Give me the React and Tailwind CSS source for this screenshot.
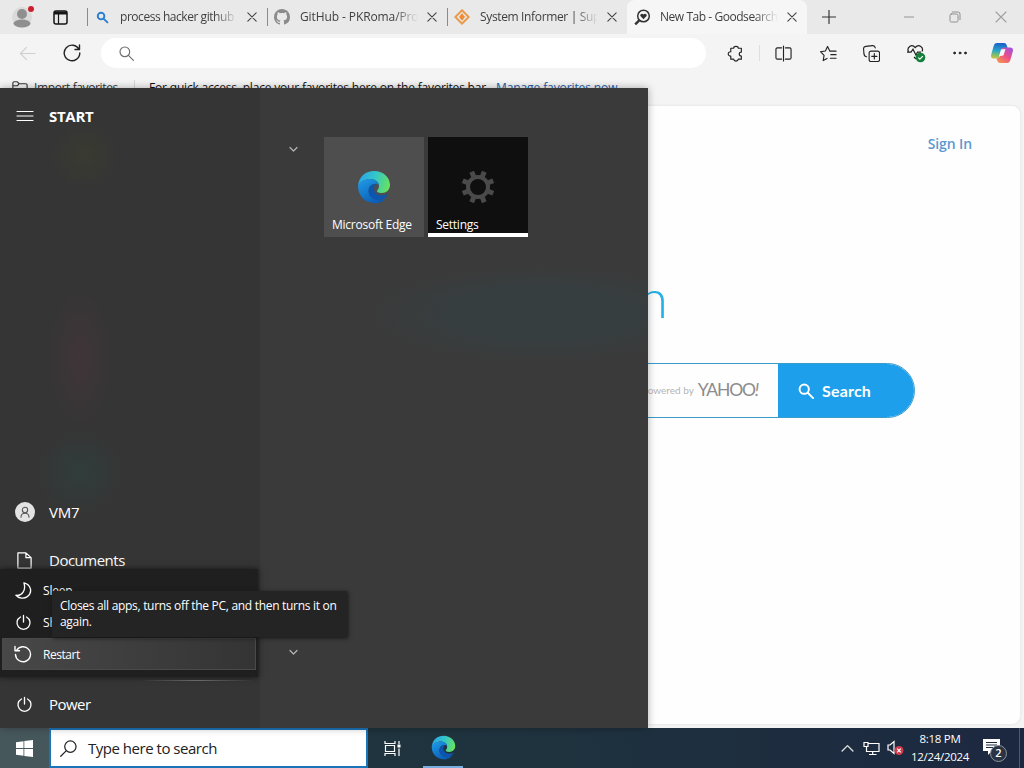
import { VscGithubInverted } from "react-icons/vsc"

function Icon({ size = 18, width = 1.2, className = "", children }) {
  return (
    <svg
      width={size}
      height={size}
      viewBox="0 0 18 18"
      fill="none"
      stroke="currentColor"
      strokeWidth={width}
      strokeLinecap="round"
      strokeLinejoin="round"
      className={`shrink-0 ${className}`}
    >
      {children}
    </svg>
  )
}

function EdgeLogo({ size }) {
  return (
    <svg width={size} height={size} viewBox="0 0 34 34" fill="none" className="shrink-0">
      <defs>
        <linearGradient id="edgeTop" x1="2" y1="8" x2="32" y2="18" gradientUnits="userSpaceOnUse">
          <stop offset="0" stopColor="#2aa5e8" />
          <stop offset="0.5" stopColor="#35c8c4" />
          <stop offset="1" stopColor="#6be25a" />
        </linearGradient>
        <linearGradient id="edgeSide" x1="4" y1="8" x2="18" y2="34" gradientUnits="userSpaceOnUse">
          <stop offset="0" stopColor="#1f9be6" />
          <stop offset="1" stopColor="#0b5bb5" />
        </linearGradient>
      </defs>
      <path
        d="M1 16C2 6 9 1 17 1c10 0 16 7 16 14 0 5-4 8-8 8-4 0-5-1-5-2 0-1 2-2 2-5 0-4-4-7-9-7C8 9 3 12 1 16z"
        fill="url(#edgeTop)"
      />
      <path
        d="M1 16c2-5 7-7 12-7 5 0 9 3 9 6-2-2-8-2-10 3-2 7 4 13 12 12 2 0 4-1 5-2-3 4-8 6-13 5C7 32 1 25 1 16z"
        fill="url(#edgeSide)"
      />
      <path
        d="M12 18c1-3 4-4 7-4-1 1-2 3-2 4 0 7 7 9 14 6-2 4-6 7-11 6-6-1-10-6-8-12z"
        fill="#0e55ad"
      />
    </svg>
  )
}

function PowerIcon({ size = 18 }) {
  return (
    <Icon size={size} width={1.4}>
      <path d="M9 1.5v7M5.8 3.2a6.9 6.9 0 1 0 6.4 0" />
    </Icon>
  )
}

function Gear() {
  return (
    <svg width="34" height="34" viewBox="0 0 34 34" fill="none" stroke="#4a4a4a">
      <circle cx="17" cy="17" r="10" strokeWidth="4" />
      {[22.5, 67.5, 112.5, 157.5, 202.5, 247.5, 292.5, 337.5].map((angle) => (
        <path key={angle} d="M17 6V0.500" strokeWidth="5" transform={`rotate(${angle} 17 17)`} />
      ))}
    </svg>
  )
}

const tabs = [
  {
    title: "process hacker github",
    tracking: "tracking-[-0.45px]",
    icon: (
      <Icon size={13} width={2.6} className="text-[#2b7fd0]">
        <circle cx="7" cy="7" r="4.6" />
        <path d="m10.8 10.8 5 5" />
      </Icon>
    ),
  },
  {
    title: "GitHub - PKRoma/Pro",
    tracking: "tracking-[-0.1px]",
    icon: <VscGithubInverted size={16} className="text-[#8b8b8b]" />,
  },
  {
    title: "System Informer | Supp",
    tracking: "tracking-[-0.35px]",
    icon: (
      <svg width="16" height="16" viewBox="0 0 16 16" fill="none">
        <path d="m8 1.3 6.7 6.7L8 14.7 1.3 8z" stroke="#e99a4b" strokeWidth="2" />
        <path d="M8 4.3 11 8l-3 3.7L5 8z" fill="#ee8d35" />
      </svg>
    ),
  },
  {
    title: "New Tab - Goodsearch",
    tracking: "tracking-[-0.45px]",
    active: true,
    icon: (
      <svg width="17" height="17" viewBox="0 0 17 17" fill="none" stroke="#333" className="-ml-1">
        <circle cx="9.5" cy="7" r="5.8" strokeWidth="1.5" />
        <path d="m5.2 11.4-4 4" strokeWidth="2.4" />
        <path d="M9.5 10.2 6.4 7c-.8-1.6 1.6-3.2 3.1-1.5 1.5-1.7 3.9-.1 3.1 1.5z" fill="#333" stroke="none" />
      </svg>
    ),
  },
]

function TabBar() {
  return (
    <div className="flex h-[34px] bg-[#e9e9e9] text-xs text-[#3f3f3f]">
      <div className="relative flex w-[87px] items-center pl-3">
        <svg width="20" height="22" viewBox="0 0 20 22" className="text-[#8a8a8a]">
          <circle cx="10" cy="11" r="10" fill="#dadada" />
          <circle cx="10" cy="8" r="5" fill="#8f8f8f" />
          <ellipse cx="10" cy="17.5" rx="8.5" ry="4" fill="#8f8f8f" />
        </svg>
        <span className="absolute left-[28px] top-[6px] size-[6px] rounded-full bg-[#cc1f2b]" />
        <svg width="15" height="15" viewBox="0 0 15 15" fill="none" stroke="#161616" className="ml-[21px]">
          <rect x="1" y="1" width="13" height="13" rx="2" strokeWidth="1.5" />
          <path d="M1 3h13" strokeWidth="3" />
          <path d="M5.5 4v10" strokeWidth="1.2" />
        </svg>
      </div>
      {tabs.map((tab) => (
        <div
          key={tab.title}
          className={
            tab.active
              ? "flex w-[180px] items-center rounded-t-lg bg-[#f6f6f6]"
              : "flex w-[180px] items-center"
          }
        >
          <span className={tab.active ? "h-[18px] w-px" : "h-[18px] w-px bg-[#8a8a8a]"} />
          <span className={tab.active ? "flex w-8 justify-center" : "flex w-8 justify-center pr-1"}>
            {tab.icon}
          </span>
          <span className={`w-[118px] whitespace-nowrap mask-r-from-80% ${tab.tracking}`}>
            {tab.title}
          </span>
          <Icon size={10} width={2} className="ml-[9px] text-[#444]">
            <path d="m1.5 1.5 15 15M16.5 1.5l-15 15" />
          </Icon>
        </div>
      ))}
      <div className="flex flex-1 items-center pl-[15px]">
        <Icon size={14} width={1.5} className="text-[#333]">
          <path d="M9 .5v17M.5 9h17" />
        </Icon>
        <Icon size={10} width={1.6} className="ml-[68px] text-[#8a8a8a]">
          <path d="M0 9h18" />
        </Icon>
        <Icon size={12} width={1.4} className="ml-[35px] text-[#8a8a8a]">
          <rect x="1.5" y="4.5" width="12" height="12" rx="2" />
          <path d="M5 1.5h8.5a3 3 0 0 1 3 3V13" />
        </Icon>
        <Icon size={12} width={1.7} className="ml-[34px] text-[#a0a0a0]">
          <path d="m1.5 1.5 15 15M16.5 1.5l-15 15" />
        </Icon>
      </div>
    </div>
  )
}

function CopilotLogo() {
  return (
    <svg width="22" height="20" viewBox="0 0 22 20" fill="none">
      <defs>
        <linearGradient id="pilotA" x1="6" y1="0" x2="4" y2="17" gradientUnits="userSpaceOnUse">
          <stop offset="0" stopColor="#1b62c9" />
          <stop offset="0.45" stopColor="#2aa6c9" />
          <stop offset="0.75" stopColor="#8fc25a" />
          <stop offset="1" stopColor="#f2c23c" />
        </linearGradient>
        <linearGradient id="pilotB" x1="19" y1="4" x2="8" y2="20" gradientUnits="userSpaceOnUse">
          <stop offset="0" stopColor="#a34fe0" />
          <stop offset="0.5" stopColor="#ec4f86" />
          <stop offset="1" stopColor="#f5974e" />
        </linearGradient>
      </defs>
      <path d="M6 0h7c2 0 2.500 1.500 3 3l.6 2H13c-2 0-2.500 1-3 3l-1.500 5c-.5 2-1.500 2.500-3 2.500H3c-3 0-3.500-2-2.500-5l2-7C3.200 1 4.200 0 6 0z" fill="url(#pilotA)" />
      <path d="M16 20H9c-2 0-2.500-1.500-3-3l-.5-1.500c2 0 3-1 3.500-3L10.500 7c.5-2 1.500-2.500 3-2.500H19c3 0 3.500 2 2.500 5l-2 7C18.800 19 17.800 20 16 20z" fill="url(#pilotB)" />
      <path d="m10 6.500 4.500-.5-2 6.500-4.500.8z" fill="#f6f6f6" />
    </svg>
  )
}

function Toolbar() {
  return (
    <div className="flex h-[38px] items-center text-[#222]">
      <Icon size={17} width={1.2} className="ml-[19px] text-[#cfcfcf]">
        <path d="M17 9H1.5M8 2.500 1.500 9 8 15.500" />
      </Icon>
      <Icon size={18} width={1.4} className="ml-[27px]">
        <path d="M16 5.500A7.800 7.800 0 1 0 16.800 9M16.500 1v4.500H12" />
      </Icon>
      <div className="ml-5 flex h-[30px] w-[605px] items-center rounded-full bg-white pl-[18px]">
        <Icon size={15} width={1.4} className="text-[#6d6d6d]">
          <circle cx="7" cy="7" r="5.8" />
          <path d="m11.300 11.300 6 6" />
        </Icon>
      </div>
      <Icon size={17} className="ml-[21px]">
        <path d="M4 3.500h3c.2-2.700 4.800-2.700 5 0h3.200V7.500c-3 0-3 4.200 0 4.200V15H12c-.4 2.700-4.600 2.700-5 0H4v-3.300c-3.600 0-3.600-4.600 0-4.600z" />
      </Icon>
      <span className="ml-[15px] h-4 w-px bg-[#dedede]" />
      <Icon size={17} className="ml-[15px]">
        <path d="M7 3H2.500A1.500 1.500 0 0 0 1 4.500v9A1.500 1.500 0 0 0 2.500 15H7M11 3h4.500A1.500 1.500 0 0 1 17 4.500v9a1.500 1.500 0 0 1-1.500 1.500H11M9 1v16" />
      </Icon>
      <Icon size={17} className="ml-[28px]">
        <path d="M10.500 6.500 8 1.500 5.700 6.300l-5.200.8L4.300 11l-.9 5.500 4.100-2.300M10.500 6.500H17M11.500 10.200H17M11 14h6" />
      </Icon>
      <Icon size={17} className="ml-[26px]">
        <rect x="6.500" y="6.500" width="11" height="11" rx="2" />
        <path d="M12 9.200v5.600M9.200 12h5.600M3.800 12.500C2 12.500 1.300 11 1 9.500L.6 4C.5 2.500 1.500 1.700 3 1.500L10 .7c1.700-.2 2.700.6 3 2.300" />
      </Icon>
      <svg width="20" height="19" viewBox="0 0 20 19" fill="none" stroke="#222" strokeWidth="1.2" className="ml-[26px]">
        <path d="m10 15-2-2M2.500 7.500C.5 3.500 5.500-.5 9.200 3.500 13-.5 18 3.500 16 7.500M1 8.200h4l2-3 3 6 1.500-3H15" />
        <circle cx="14.500" cy="13.500" r="4.800" fill="#13803a" stroke="none" />
        <path d="m12.300 13.600 1.600 1.600 2.900-3" stroke="#fff" />
      </svg>
      <Icon size={14} className="ml-[27px]">
        <circle cx="2" cy="9" r="1.200" fill="currentColor" />
        <circle cx="9" cy="9" r="1.200" fill="currentColor" />
        <circle cx="16" cy="9" r="1.200" fill="currentColor" />
      </Icon>
      <span className="ml-6">
        <CopilotLogo />
      </span>
    </div>
  )
}

function FavoritesBar() {
  return (
    <div className="flex h-[34px] items-center pb-[2px] text-xs text-[#333]">
      <Icon size={16} width={1.3} className="ml-3">
        <path d="M1 14V3.500A1.500 1.500 0 0 1 2.500 2H6l2 2.200h7.500A1.500 1.500 0 0 1 17 5.700V14a1.500 1.500 0 0 1-1.500 1.500h-13A1.500 1.500 0 0 1 1 14zM1 6.500h5L8 4.200" />
      </Icon>
      <span className="ml-[6px] w-[85px] whitespace-nowrap tracking-[-0.38px]">Import favorites</span>
      <span className="ml-[15px] h-4 w-px bg-[#d5d5d5]" />
      <span className="ml-[14px] w-[347px] whitespace-nowrap tracking-[-0.18px] text-[#111]">
        For quick access, place your favorites here on the favorites bar.
      </span>
      <span className="whitespace-nowrap tracking-[-0.1px] text-[#1f5ea8]">Manage favorites now</span>
    </div>
  )
}

function GoodsearchPage() {
  return (
    <div className="mr-1 flex h-[618px] flex-col items-end overflow-hidden rounded-lg bg-[#fefefe] shadow-[0_0_3px_#dcdcdc]">
      <span className="mr-[48px] mt-[28px] text-sm font-semibold leading-5 tracking-[-0.1px] text-[#5b98cf]">
        Sign In
      </span>
      <span className="mr-[352px] mt-[114px] font-['Lato',sans-serif] text-[54px] font-light leading-[60px] text-[#22b0e6]">
        Goodsearch
      </span>
      <div className="mr-[105px] mt-[35px] flex h-[55px] w-[560px] overflow-hidden rounded-full border border-[#3b9bcb]">
        <div className="flex flex-1 items-center justify-end pr-5 font-['Lato',sans-serif] text-[#8c8c8c]">
          <span className="mr-1 text-[10px] text-[#b5b5b5]">Powered by</span>
          <span className="text-[17.5px] tracking-[-1.2px]">
            YAHOO<i>!</i>
          </span>
        </div>
        <button className="flex w-[136px] items-center bg-[#1d9fec] pl-5 font-['Lato',sans-serif] text-base font-bold tracking-[0.2px] text-white">
          <Icon size={16} width={2.2} className="mr-2">
            <circle cx="7" cy="7" r="5.2" />
            <path d="m11 11 6 6" />
          </Icon>
          Search
        </button>
      </div>
    </div>
  )
}

function Chevron() {
  return (
    <Icon size={9} width={2.4} className="text-[#b5b5b5]">
      <path d="m2 5 7 7 7-7" />
    </Icon>
  )
}

const powerOptions = [
  {
    name: "Sleep",
    icon: (
      <Icon size={17} width={1.4}>
        <path d="M9.500 1C17 3 19 11 13 15.500 9.500 18 4 17.500 1 14c6 1 11-5 8.500-13z" />
      </Icon>
    ),
  },
  { name: "Shut down", icon: <PowerIcon size={17} /> },
  {
    name: "Restart",
    selected: true,
    icon: (
      <Icon size={18} width={1.4}>
        <path d="M2.500 5.500a7.500 7.500 0 1 1-1 4M1 1.500v4.300h4.500" />
      </Icon>
    ),
  },
]

function PowerMenu() {
  return (
    <div className="absolute left-0 top-[481px] h-[108px] w-[258px] bg-[#1f1f1f] px-[2px] pt-[5px] shadow-[0_0_6px_#151515]">
      {powerOptions.map((option) => (
        <div
          key={option.name}
          className={
            option.selected
              ? "flex h-8 items-center border border-[#4a4a4a] bg-linear-to-r from-[#484848] to-[#343434] pl-[11px]"
              : "flex h-8 items-center pl-[13px]"
          }
        >
          {option.icon}
          <span
            className={
              option.selected
                ? "ml-[11px] pt-0.5 text-xs tracking-[-0.45px] text-white"
                : "ml-[11px] pt-0.5 text-xs tracking-[-0.2px] text-white"
            }
          >
            {option.name}
          </span>
        </div>
      ))}
      <div className="absolute left-[52px] top-[22px] h-[46px] w-[295px] bg-[#242424] py-[7px] pl-2 text-xs leading-4 text-white shadow-[1px_1px_4px_#151515]">
        <p className="whitespace-nowrap tracking-[-0.3px]">
          Closes all apps, turns off the PC, and then turns it on
        </p>
        <p className="tracking-[-0.3px]">again.</p>
      </div>
    </div>
  )
}

function StartMenu() {
  return (
    <div className="absolute left-0 top-[88px] flex h-[640px] w-[648px] bg-[#3a3a3a] text-white shadow-[0_0_8px_#00000050]">
      <div className="flex w-[260px] flex-col bg-[#353535] bg-[radial-gradient(circle_at_84px_68px,#393a30,transparent_34px),radial-gradient(ellipse_34px_74px_at_80px_270px,#403539,transparent),radial-gradient(circle_at_80px_384px,#303d3c,transparent_42px)]">
        <div className="flex h-14 items-center pl-4">
          <Icon size={18} width={1.2}>
            <path d="M1 4.500h16M1 9h16M1 13.500h16" />
          </Icon>
          <span className="ml-[15px] text-[15px] font-bold tracking-[-0.3px]">START</span>
        </div>
        <div className="mt-[344px] flex h-12 items-center pl-[15px]">
          <span className="flex size-5 items-center justify-center rounded-full bg-[#e3e3e3] text-[#555]">
            <Icon size={12} width={1.6}>
              <circle cx="9" cy="6" r="4" />
              <path d="M3 17c0-8 12-8 12 0" />
            </Icon>
          </span>
          <span className="ml-[14px] text-[15px] tracking-[-0.2px]">VM7</span>
        </div>
        <div className="flex h-12 items-center pl-4">
          <Icon size={17} width={1.3}>
            <path d="M2 1h8.500L16 6v11H2zM10.500 1v5H16" />
          </Icon>
          <span className="ml-4 text-[15px] tracking-[-0.5px]">Documents</span>
        </div>
        <div className="mt-24 flex h-12 items-center pl-4">
          <PowerIcon size={17} />
          <span className="ml-4 text-[15px] tracking-[-0.55px]">Power</span>
        </div>
        <span className="absolute left-[140px] top-[592px] h-px w-[115px] bg-linear-to-r from-transparent via-[#777] to-transparent" />
      </div>
      <div className="flex flex-1 bg-[radial-gradient(ellipse_170px_48px_at_280px_226px,#373e40_55%,transparent)] pl-[29px]">
        <div className="flex w-[35px] flex-col justify-between pb-[71px] pt-[57px]">
          <Chevron />
          <Chevron />
        </div>
        <div className="flex gap-1 pt-[49px] text-xs">
          <div className="flex h-[100px] w-[100px] flex-col items-center bg-[#4e4e4e] pt-[33px]">
            <EdgeLogo size={34} />
            <span className="mt-[13px] w-full whitespace-nowrap pl-2 tracking-[-0.25px]">Microsoft Edge</span>
          </div>
          <div className="flex h-[100px] w-[100px] flex-col items-center border-b-4 border-white bg-[#0f0f0f] pt-[33px]">
            <Gear />
            <span className="mt-[13px] w-full pl-2 tracking-[-0.25px]">Settings</span>
          </div>
        </div>
      </div>
      <PowerMenu />
    </div>
  )
}

function Taskbar() {
  return (
    <div className="flex h-10 items-center bg-linear-to-r from-[#1e363d] via-[#1f333e] to-[#1c2840] text-white">
      <div className="flex h-full w-[49px] items-center justify-center bg-[#46575c]">
        <svg width="17" height="17" viewBox="0 0 17 17" fill="#fff">
          <path d="M0 2.300 7.500 1.200v6.900H0zM8.300 1.100 17 0v8.100H8.300zM0 8.900h7.500v6.900L0 14.700zM8.300 8.900H17V17l-8.700-1.100z" />
        </svg>
      </div>
      <div className="flex h-full w-[319px] items-center border-2 border-[#1a74b8] bg-white pl-[9px] text-[#222]">
        <Icon size={17} width={1.3}>
          <circle cx="11" cy="7" r="6" />
          <path d="M6.700 11.300.8 17.200" />
        </Icon>
        <span className="ml-[11px] text-[15px] tracking-[-0.48px]">Type here to search</span>
      </div>
      <svg width="17" height="17" viewBox="0 0 17 17" fill="none" stroke="#fff" strokeWidth="1.2" className="ml-4">
        <path d="M1 1v2.500h10V1M1 16v-2.500h10V16M1.500 5.500h9v6h-9zM15 1v3M15 8.500V16" />
        <path d="M13.500 4.500h3v3h-3z" fill="#fff" stroke="none" />
      </svg>
      <div className="ml-[22px] flex h-full w-10 flex-col items-center justify-between border-b-2 border-[#79aee0] pt-[7px]">
        <EdgeLogo size={25} />
      </div>
      <div className="ml-auto flex items-center pr-[19px]">
        <Icon size={13} width={1.9} className="text-[#e0e0e0]">
          <path d="m1.500 12.500 7.500-7.500 7.500 7.500" />
        </Icon>
        <svg width="17" height="15" viewBox="0 0 17 15" fill="none" stroke="#fff" strokeWidth="1.2" className="ml-[9px]">
          <path d="M5 2.500h11v8H3.500V7M9.700 10.500v3M6 13.500h7.500M1 1.500h4v4H1zM3.500 5.500V9" />
        </svg>
        <svg width="17" height="16" viewBox="0 0 17 16" fill="none" stroke="#fff" strokeWidth="1.2" className="ml-[7px]">
          <path d="M1 5h2l4-3.500v12L3 10H1z" />
          <circle cx="12" cy="10.500" r="4.500" fill="#cf3b4a" stroke="none" />
          <path d="m10.200 8.700 3.600 3.600M13.800 8.700l-3.600 3.600" />
        </svg>
        <div className="ml-[6px] w-[60px] whitespace-nowrap text-center text-[11.5px] leading-[18px] tracking-[-0.3px]">
          <p>8:18 PM</p>
          <p>12/24/2024</p>
        </div>
        <div className="relative ml-[13px] mb-[3px]">
          <svg width="17" height="17" viewBox="0 0 17 17">
            <path d="M0 1h17v12H9l-4 4v-4H0z" fill="#fff" />
            <path d="M3 4.500h11M3 7h11M3 9.500h7" stroke="#1c2b40" />
          </svg>
          <span className="absolute left-[7px] top-[7px] flex size-[17px] items-center justify-center rounded-full border border-[#8f949c] bg-[#2a3444] text-[11px] font-semibold">
            2
          </span>
        </div>
      </div>
      <span className="h-full w-px bg-[#50596a]" />
      <span className="w-[4px]" />
    </div>
  )
}

export default function App() {
  return (
    <div className="relative h-[768px] w-[1024px] overflow-hidden bg-[#f4f4f4] font-['Open_Sans','Noto_Sans',sans-serif]">
      <div className="h-[728px]">
        <TabBar />
        <Toolbar />
        <FavoritesBar />
        <GoodsearchPage />
      </div>
      <Taskbar />
      <StartMenu />
    </div>
  )
}
